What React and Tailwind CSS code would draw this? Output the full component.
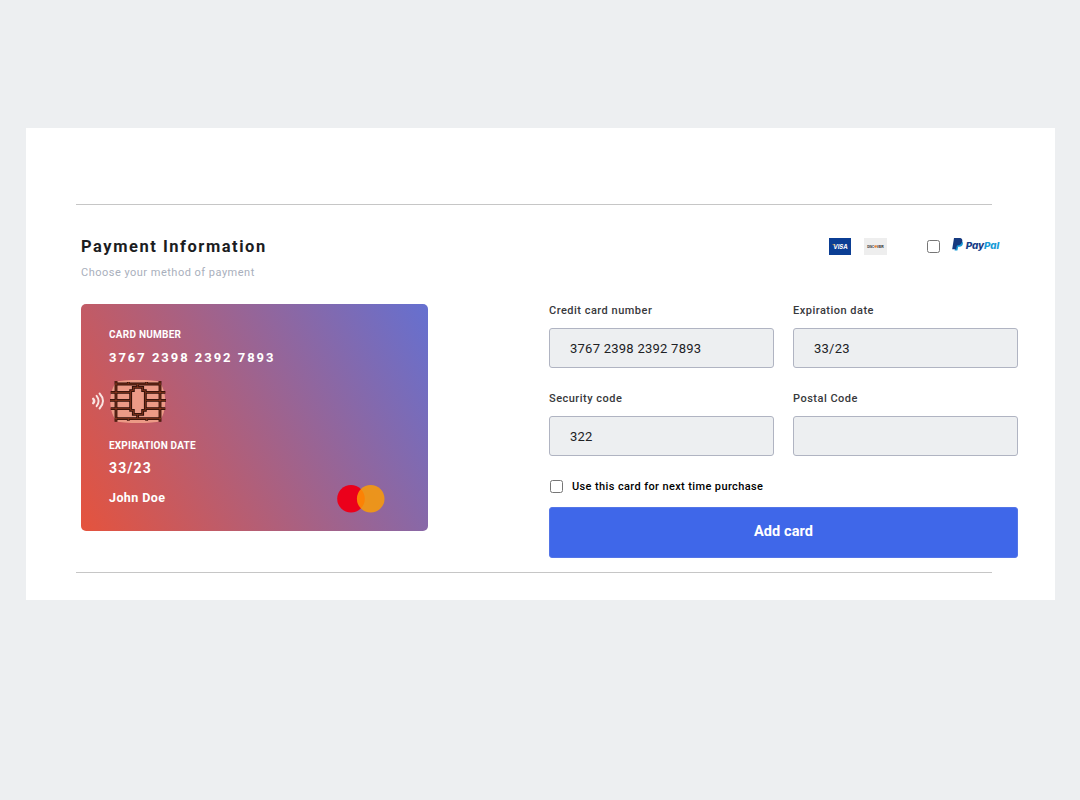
import React from "react";

function Visa() {
  return (
    <svg width="22" height="17" viewBox="0 0 22 17" className="block">
      <rect width="22" height="17" fill="#0b3e94" />
      <text x="4.200" y="10.800" fontFamily="Inter" fontSize="6" fontWeight="700" fontStyle="italic" fill="#fff" textLength="14.500" lengthAdjust="spacingAndGlyphs">VISA</text>
      <path d="M3 6.200h2.200l.8 1.900z" fill="#e9a63a" />
    </svg>
  );
}

function Discover() {
  return (
    <svg width="23" height="17" viewBox="0 0 23 17" className="block overflow-visible">
      <rect width="23" height="17" fill="#eeeeee" />
      <g fontFamily="Liberation Sans" fontSize="3.800" fontWeight="700" fill="#222">
        <text x="3.200" y="9.900" textLength="7" lengthAdjust="spacingAndGlyphs">DISC</text>
        <text x="12.800" y="9.900" textLength="7" lengthAdjust="spacingAndGlyphs">VER</text>
      </g>
      <circle cx="11.500" cy="8.500" r="1.300" fill="#e98236" />
    </svg>
  );
}

function PayPal() {
  return (
    <svg width="48" height="14" viewBox="0 0 48 14" className="block">
      <path d="M4.200 3.200h5.600c2 .7 1.400 5.300-2.200 5.600H6.200L5.400 12.600H2.600z" fill="#179bd7" />
      <path d="M2 .1h5.200c3 0 3.600 2.100 2.900 4C9.200 6.600 7.600 7.600 4.900 7.600L4.100 11.200H.2z" fill="#163a80" />
      <g fontFamily="Inter" fontSize="9.300" fontWeight="800" fontStyle="italic">
        <text x="13.700" y="11" fill="#163d87" textLength="18.500" lengthAdjust="spacingAndGlyphs">Pay</text>
        <text x="32" y="11" fill="#179bd7" textLength="15.200" lengthAdjust="spacingAndGlyphs">Pal</text>
      </g>
    </svg>
  );
}

const chipLines =
  "M18 3V125M150 3V125M15 12H153M15 116H153M2 37H60M0 61H60M2 86H60M108 37H166M108 61H168M108 86H166M55 6V12M110 6V12M55 116V122M110 116V122M83 12V22M83 104V114M70 22H98V32H106V91H98V103H70V91H62V32H70Z";

function Chip() {
  return (
    <svg width="56" height="43" viewBox="0 0 168 129" className="block">
      <path d="M22 4Q84-5 146 4C172 30 172 99 146 125Q84 134 22 125C-6 99-6 30 22 4Z" fill="#ec9a86" />
      <path d={chipLines} fill="none" stroke="#2c0f08" strokeWidth="8.500" />
      <path d={chipLines} fill="none" stroke="#a84424" strokeWidth="2" />
    </svg>
  );
}

function Waves() {
  return (
    <svg width="13" height="18" viewBox="0 0 13 18" className="block" fill="none" stroke="#f9e4e2" strokeWidth="1.900" strokeLinecap="round">
      <path d="M2.200 6.800Q4.200 9 2.200 11.200" strokeWidth="2.400" />
      <path d="M5.600 3.800Q9.600 9 5.600 14.200" />
      <path d="M8.600 1.500Q15.400 9 8.600 16.500" />
    </svg>
  );
}

function Check() {
  return <input type="checkbox" className="m-0 block h-[13px] w-[13px] shrink-0" />;
}

function Field({ label, value }) {
  return (
    <label className="block">
      <span className="block h-[14px] text-[11px] leading-[14px] font-medium tracking-[0.490px] text-[#38393c]">{label}</span>
      <input
        defaultValue={value}
        className="mt-[10px] block h-10 w-full rounded-[3px] border border-[#b0b4c2] bg-[#edeff1] px-5 text-[13px] tracking-[0.250px] text-[#202124] outline-none"
      />
    </label>
  );
}

export default function App() {
  return (
    <div className="min-h-screen bg-[#edeff1] pt-32 pl-[26px] font-['Roboto',sans-serif]">
      <main className="h-[472px] w-[1029px] bg-white pt-[76px] pl-[50px]">
        <hr className="w-[916px] border-t border-[#c6c6c6]" />
        <div className="flex h-[98px] w-[942px] justify-between pt-[31px] pl-[5px]">
          <div>
            <h1 className="pt-px text-[16.5px] leading-5 font-bold tracking-[1.530px] text-[#1c1d1f]">Payment Information</h1>
            <p className="mt-[8px] text-[11px] leading-4 tracking-[0.490px] text-[#a9afbc]">Choose your method of payment</p>
          </div>
          <div className="flex items-start pr-[18px]">
            <div className="mt-[2px] mr-[13px]"><Visa /></div>
            <div className="mt-[2px] mr-[40px]"><Discover /></div>
            <div className="mt-[4px] mr-[12px]"><Check /></div>
            <div className="mt-[2px]"><PayPal /></div>
          </div>
        </div>
        <div className="flex h-[269px] pl-[5px]">
          <section className="mt-[1px] h-[227px] w-[347px] rounded-[5px] bg-[linear-gradient(60deg,#e5533d,#6570d0)] pt-[24px] pl-[28px] text-white">
            <p className="text-[10px] leading-[14px] font-bold tracking-[0.250px]">CARD NUMBER</p>
            <p className="mt-[7px] text-[13px] leading-[18px] font-bold tracking-[1.970px]">3767 2398 2392 7893</p>
            <div className="mt-[13px] -ml-[18px] flex h-[43px] items-center gap-[6px]">
              <div className="-mt-[2px]"><Waves /></div>
              <Chip />
            </div>
            <p className="mt-[16px] text-[10px] leading-[14px] font-bold tracking-[0.200px]">EXPIRATION DATE</p>
            <p className="mt-[6px] text-[14px] leading-[18px] font-bold tracking-[1.100px]">33/23</p>
            <div className="flex justify-between pr-[43px]">
              <p className="mt-[12px] text-[12.5px] leading-[18px] font-bold tracking-[0.400px]">John Doe</p>
              <svg width="49" height="28" viewBox="0 0 49 28" className="mt-[8px] block">
                <circle cx="15" cy="13.800" r="13.800" fill="#eb001b" />
                <circle cx="34.700" cy="13.800" r="13.800" fill="#ff9f00" fillOpacity=".82" />
              </svg>
            </div>
          </section>
          <form className="ml-[121px] w-[469px]">
            <div className="grid grid-cols-[225px_225px] gap-x-[19px] gap-y-[24px] pt-[1px]">
              <Field label="Credit card number" value="3767 2398 2392 7893" />
              <Field label="Expiration date" value="33/23" />
              <Field label="Security code" value="322" />
              <Field label="Postal Code" value="" />
            </div>
            <label className="mt-[22px] flex h-4 items-center gap-[9px] pl-[1px] text-[11px] leading-4 font-medium tracking-[0.380px] text-black">
              <Check />
              <span className="pt-[2px]">Use this card for next time purchase</span>
            </label>
            <button type="button" className="mt-[13px] block h-[51px] w-full rounded-[3px] border border-[#5475e7] bg-[#3f67e9] pb-px text-[14.5px] font-bold tracking-[0.100px] text-white">Add card</button>
          </form>
        </div>
        <hr className="w-[916px] border-t border-[#c6c6c6]" />
      </main>
    </div>
  );
}
